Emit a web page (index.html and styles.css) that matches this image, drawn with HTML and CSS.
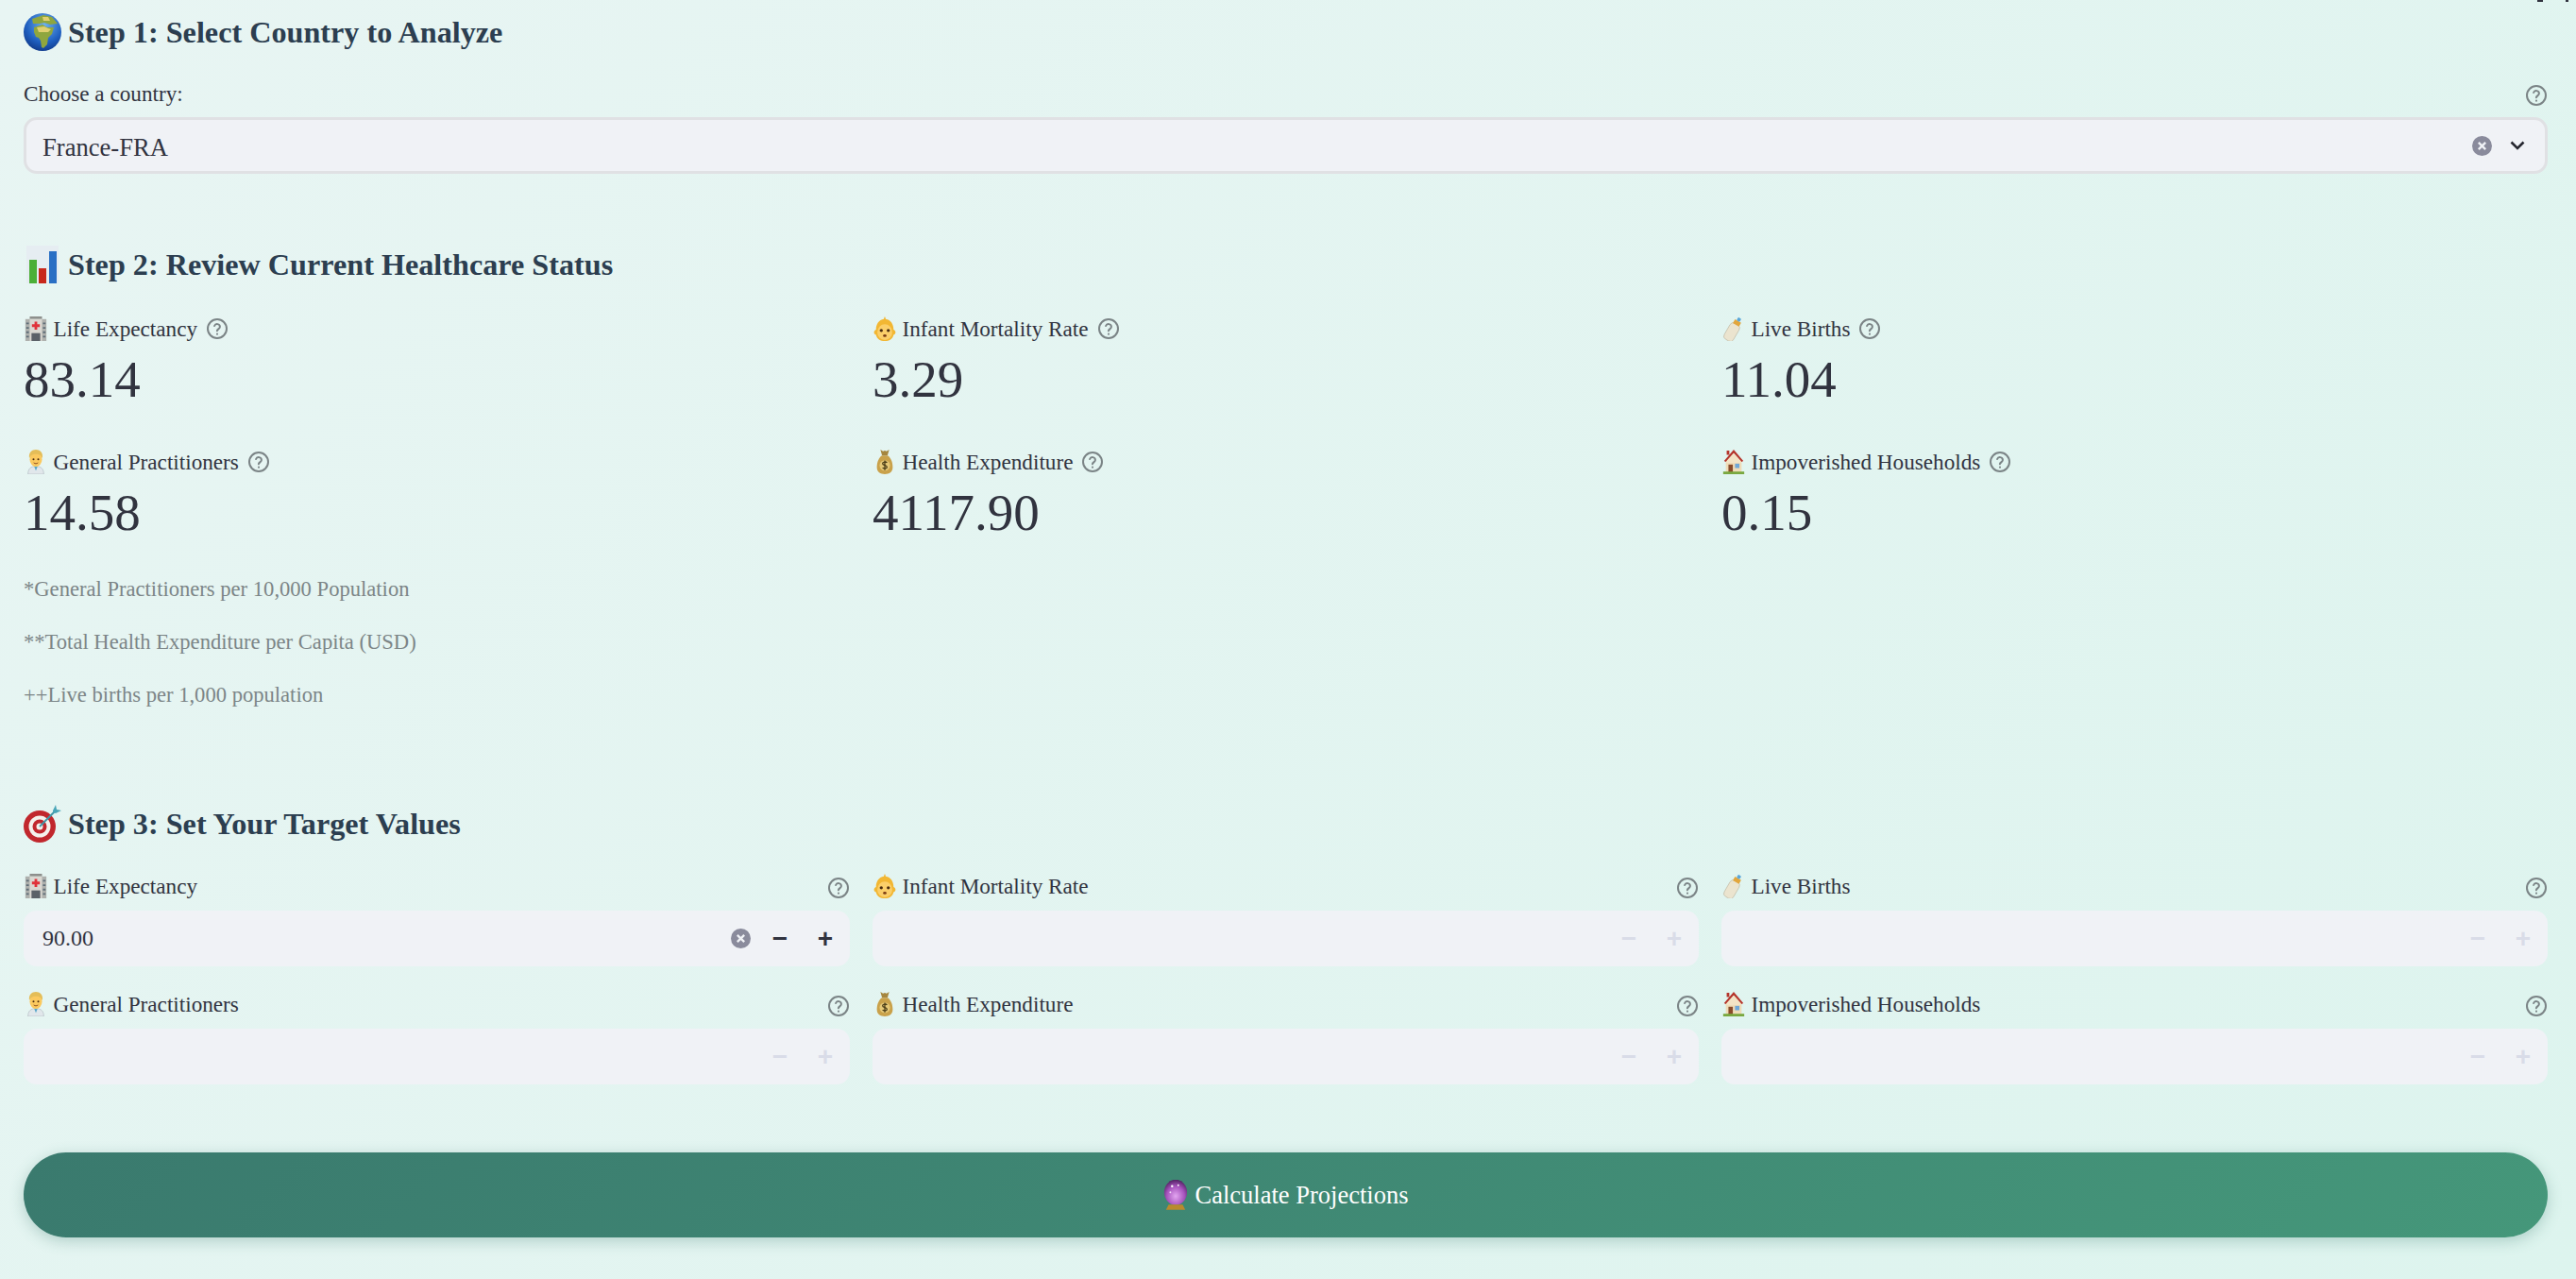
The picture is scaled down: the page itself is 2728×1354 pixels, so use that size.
FILE: index.html
```html
<!DOCTYPE html>
<html lang="en">
<head>
    <meta charset="UTF-8" />
    <title>Healthcare Projections</title>
    <link rel="stylesheet" href="styles.css">
</head>
<body>
    <svg class="defs" width="0" height="0">
        <defs>
            <radialGradient id="sea" cx="55%" cy="30%" r="80%">
                <stop offset="0" stop-color="#6fb2ee" /><stop offset="0.6" stop-color="#1f5fc0" /><stop offset="1" stop-color="#0c2f7a" />
            </radialGradient>
            <radialGradient id="orbglow" cx="50%" cy="65%" r="65%">
                <stop offset="0" stop-color="#e3a6f0" /><stop offset="0.6" stop-color="#a653bd" /><stop offset="1" stop-color="#4f2160" />
            </radialGradient>
            <symbol id="help" viewBox="0 0 24 24">
                <circle cx="12" cy="12" r="10" fill="none" stroke="currentColor" stroke-width="2" />
                <path d="M9.1 9a3 3 0 0 1 5.8 1c0 2-3 2.600-3 4.200M12 17.600v.1" fill="none" stroke="currentColor" stroke-width="2" stroke-linecap="round" />
            </symbol>
            <symbol id="globe" viewBox="0 0 40 40">
                <circle cx="20" cy="20" r="20" fill="url(#sea)" />
                <path d="M9 6l12-4 9 2 6 7-8 1-6-2-5 1-7 0z" fill="#8fa63e" />
                <path d="M11 15l9-3 5 3 7 0-2 7-4 4-1 7-4 4-2-1-1-7-2-3-3-1-2-5z" fill="#8fa63e" />
                <path d="M14 15l8-1 4 2 3 1-3 3-10 0zM20 4l6 0 2 4-7 0z" fill="#e0d070" />
            </symbol>
            <symbol id="chart" viewBox="0 0 34 40">
                <rect width="34" height="40" fill="#e6edf2" />
                <rect x="3" y="15" width="8" height="25" fill="#4caf38" />
                <rect x="13" y="24" width="8" height="16" fill="#c8281c" />
                <rect x="24" y="6" width="8" height="34" fill="#2a6fc4" />
            </symbol>
            <symbol id="hospital" viewBox="0 0 28 28">
                <rect x="7" y="0" width="14" height="3" fill="#8d8f8c" />
                <rect x="2" y="3" width="24" height="25" fill="#aeb0ad" />
                <rect x="7" y="3" width="14" height="25" fill="#dad8d2" />
                <path d="M12.500 6h3v3h3v3h-3v3h-3v-3h-3v-3h3z" fill="#e0323a" />
                <rect x="9" y="19" width="10" height="9" fill="#5b6168" />
                <path d="M3 7h3v2H3zM22 7h3v2h-3zM3 12h3v2H3zM22 12h3v2h-3zM3 17h3v2H3zM22 17h3v2h-3zM3 22h3v2H3zM22 22h3v2h-3z" fill="#5f6d78" />
            </symbol>
            <symbol id="baby" viewBox="0 0 28 28">
                <path d="M14 0c1 2 1 3 1 3 6 1 9 6 9 12 3 1 3 5 0 6-1 5-5 7-10 7s-9-2-10-7c-3-1-3-5 0-6 0-6 3-11 9-12 0 0 0-1 1-3z" fill="#f2b733" />
                <ellipse cx="14" cy="18" rx="8.500" ry="9" fill="#fbcf6a" />
                <circle cx="10" cy="16" r="1.800" fill="#4a2c0f" />
                <circle cx="18" cy="16" r="1.800" fill="#4a2c0f" />
                <ellipse cx="14" cy="22" rx="2" ry="1.500" fill="#7a3c14" />
            </symbol>
            <symbol id="bottle" viewBox="0 0 28 28">
                <g transform="rotate(30 14 14)">
                    <rect x="8" y="8" width="12" height="21" rx="4" fill="#ebe4cf" stroke="#b8b29c" stroke-width="0.600" />
                    <rect x="10" y="4" width="8" height="5" fill="#e2a63c" />
                    <rect x="12" y="0" width="4" height="4" rx="1" fill="#5aa6d8" />
                </g>
            </symbol>
            <symbol id="doctor" viewBox="0 0 28 28">
                <path d="M5 28c0-6 3-9 9-9s9 3 9 9z" fill="#e1e7eb" stroke="#a8b3ba" stroke-width="0.600" />
                <path d="M12 19h4l-2 5z" fill="#58a7c9" />
                <ellipse cx="14" cy="11" rx="7" ry="8.500" fill="#fbc95f" />
                <path d="M6.500 10c-1-7 3-10 7.500-10s8.500 3 7.500 10c-1-3-3-5-7.500-5s-6.500 2-7.500 5z" fill="#e4bd58" />
                <circle cx="11.300" cy="11" r="1.100" fill="#4a2c0f" />
                <circle cx="16.700" cy="11" r="1.100" fill="#4a2c0f" />
                <path d="M11.500 15c2 1.300 3 1.300 5 0" stroke="#8a4a1a" fill="none" />
            </symbol>
            <symbol id="bag" viewBox="0 0 28 28">
                <path d="M9 0l3 2 2-1 2 1 3-2-2 7h-6z" fill="#a5863f" />
                <path d="M10 7h8c4 4 5 9 5 13 0 6-4 8-9 8s-9-2-9-8c0-4 1-9 5-13z" fill="#c9a14a" />
                <circle cx="14" cy="18" r="6" fill="#e5c877" />
                <path d="M16.500 15c-1-1.500-5-1.500-5 .8 0 2.700 5 1.200 5 4 0 2.200-4 2.200-5 .7M14 12.500v11" fill="none" stroke="#3f3210" stroke-width="1.300" />
            </symbol>
            <symbol id="house" viewBox="0 0 28 28">
                <rect x="5" y="11" width="18" height="15" fill="#efdcb8" />
                <path d="M14 0l11 13-2 1L14 4 5 14l-2-1zM6 1h3v5H6z" fill="#b5352c" />
                <path d="M14 4l8 9v2H6v-2z" fill="#f3e4c6" />
                <rect x="8" y="17" width="5" height="9" fill="#8a4b2a" />
                <rect x="15.500" y="16" width="5" height="5" fill="#6fa8d8" />
                <rect x="2" y="25" width="24" height="3" fill="#79a83f" />
            </symbol>
            <symbol id="dart" viewBox="0 0 40 40">
                <circle cx="17" cy="23" r="17" fill="#c1272d" />
                <circle cx="17" cy="23" r="11.500" fill="#f4f1ec" />
                <circle cx="17" cy="23" r="7.500" fill="#c1272d" />
                <circle cx="17" cy="23" r="3.500" fill="#f4f1ec" />
                <path d="M17 23L33 7" stroke="#3f97a8" stroke-width="2" />
                <path d="M31 6l3-6 1 5 5 1-6 3-3-1z" fill="#4aa6b8" />
            </symbol>
            <symbol id="orb" viewBox="0 0 28 34">
                <ellipse cx="14" cy="14" rx="13" ry="14.500" fill="url(#orbglow)" />
                <circle cx="10" cy="7" r="1.300" fill="#fff" />
                <circle cx="17" cy="6" r="1" fill="#fff" />
                <circle cx="8" cy="14" r="1" fill="#f4dcf8" />
                <path d="M6 28h16l3 6H3z" fill="#b98a2e" />
            </symbol>
        </defs>
    </svg>

    <div class="toolbar-edge"><span></span><span></span></div>

    <main class="page">
        <h3 class="step-title"><svg class="step-icon"><use href="#globe" /></svg>Step 1: Select Country to Analyze</h3>
        <div class="field-head">
            <label class="field-label">Choose a country:</label>
            <svg class="help"><use href="#help" /></svg>
        </div>
        <div class="select-box">
            <span class="select-value">France-FRA</span>
            <span class="clear-btn"><svg viewBox="0 0 20 20"><path d="M6.500 6.500l7 7M13.500 6.500l-7 7" /></svg></span>
            <svg class="chevron" viewBox="0 0 16 10"><path d="M1.500 1.500L8 8l6.500-6.500" /></svg>
        </div>

        <h3 class="step-title step-two"><svg class="step-icon chart-icon"><use href="#chart" /></svg>Step 2: Review Current Healthcare Status</h3>
        <div class="metric-grid">
            <div class="metric">
                <div class="metric-label"><svg class="emoji"><use href="#hospital" /></svg>Life Expectancy<svg class="help"><use href="#help" /></svg></div>
                <div class="metric-value">83.14</div>
            </div>
            <div class="metric">
                <div class="metric-label"><svg class="emoji"><use href="#baby" /></svg>Infant Mortality Rate<svg class="help"><use href="#help" /></svg></div>
                <div class="metric-value">3.29</div>
            </div>
            <div class="metric">
                <div class="metric-label"><svg class="emoji"><use href="#bottle" /></svg>Live Births<svg class="help"><use href="#help" /></svg></div>
                <div class="metric-value">11.04</div>
            </div>
            <div class="metric">
                <div class="metric-label"><svg class="emoji"><use href="#doctor" /></svg>General Practitioners<svg class="help"><use href="#help" /></svg></div>
                <div class="metric-value">14.58</div>
            </div>
            <div class="metric">
                <div class="metric-label"><svg class="emoji"><use href="#bag" /></svg>Health Expenditure<svg class="help"><use href="#help" /></svg></div>
                <div class="metric-value">4117.90</div>
            </div>
            <div class="metric">
                <div class="metric-label"><svg class="emoji"><use href="#house" /></svg>Impoverished Households<svg class="help"><use href="#help" /></svg></div>
                <div class="metric-value">0.15</div>
            </div>
        </div>
        <div class="notes">
            <p>*General Practitioners per 10,000 Population</p>
            <p>**Total Health Expenditure per Capita (USD)</p>
            <p>++Live births per 1,000 population</p>
        </div>

        <h3 class="step-title step-three"><svg class="step-icon"><use href="#dart" /></svg>Step 3: Set Your Target Values</h3>
        <div class="target-grid">
            <div class="target">
                <div class="field-head">
                    <label class="field-label"><svg class="emoji"><use href="#hospital" /></svg>Life Expectancy</label>
                    <svg class="help"><use href="#help" /></svg>
                </div>
                <div class="num-input">
                    <input type="text" value="90.00">
                    <span class="clear-btn"><svg viewBox="0 0 20 20"><path d="M6.500 6.500l7 7M13.500 6.500l-7 7" /></svg></span>
                    <button class="step-btn">&minus;</button>
                    <button class="step-btn">+</button>
                </div>
            </div>
            <div class="target">
                <div class="field-head">
                    <label class="field-label"><svg class="emoji"><use href="#baby" /></svg>Infant Mortality Rate</label>
                    <svg class="help"><use href="#help" /></svg>
                </div>
                <div class="num-input off">
                    <input type="text">
                    <button class="step-btn">&minus;</button>
                    <button class="step-btn">+</button>
                </div>
            </div>
            <div class="target">
                <div class="field-head">
                    <label class="field-label"><svg class="emoji"><use href="#bottle" /></svg>Live Births</label>
                    <svg class="help"><use href="#help" /></svg>
                </div>
                <div class="num-input off">
                    <input type="text">
                    <button class="step-btn">&minus;</button>
                    <button class="step-btn">+</button>
                </div>
            </div>
            <div class="target">
                <div class="field-head">
                    <label class="field-label"><svg class="emoji"><use href="#doctor" /></svg>General Practitioners</label>
                    <svg class="help"><use href="#help" /></svg>
                </div>
                <div class="num-input off">
                    <input type="text">
                    <button class="step-btn">&minus;</button>
                    <button class="step-btn">+</button>
                </div>
            </div>
            <div class="target">
                <div class="field-head">
                    <label class="field-label"><svg class="emoji"><use href="#bag" /></svg>Health Expenditure</label>
                    <svg class="help"><use href="#help" /></svg>
                </div>
                <div class="num-input off">
                    <input type="text">
                    <button class="step-btn">&minus;</button>
                    <button class="step-btn">+</button>
                </div>
            </div>
            <div class="target">
                <div class="field-head">
                    <label class="field-label"><svg class="emoji"><use href="#house" /></svg>Impoverished Households</label>
                    <svg class="help"><use href="#help" /></svg>
                </div>
                <div class="num-input off">
                    <input type="text">
                    <button class="step-btn">&minus;</button>
                    <button class="step-btn">+</button>
                </div>
            </div>
        </div>

        <button class="calc-btn"><svg class="orb-icon"><use href="#orb" /></svg>Calculate Projections</button>
    </main>
</body>
</html>
```

FILE: styles.css
```css
* {
    box-sizing: border-box;
}

html, body {
    height: 100%;
}

body {
    margin: 0;
    font-family: "Liberation Serif", "Noto Sans CJK SC", serif;
    color: #31333f;
    background: linear-gradient(135deg, #e8f5f3 0%, #ddf4ee 100%);
    overflow: hidden;
    position: relative;
}

.defs {
    position: absolute;
}

.toolbar-edge {
    position: absolute;
    top: 0;
    right: 8px;
    display: flex;
    gap: 24px;
}

.toolbar-edge span {
    width: 6px;
    height: 2px;
    background: #31333f;
}

.toolbar-edge span:last-child {
    width: 3px;
}

.page {
    padding: 0 30px 0 25px;
}

.step-title {
    display: flex;
    align-items: center;
    height: 40px;
    margin: 14px 0 0;
    font-size: 32.2px;
    font-weight: 700;
    color: #2c3e50;
}

.step-icon {
    width: 40px;
    height: 40px;
    margin-right: 7px;
    flex: none;
}

.chart-icon {
    width: 34px;
    margin: 0 10px 0 3px;
}

.step-two {
    margin-top: 76px;
}

.step-three {
    margin-top: 88px;
}

.field-head {
    display: flex;
    justify-content: space-between;
    align-items: center;
    height: 30px;
}

.step-title + .field-head {
    margin-top: 30px;
}

.field-label {
    display: flex;
    align-items: center;
    font-size: 23.2px;
}

.help {
    width: 24px;
    height: 24px;
    flex: none;
    color: #7b8486;
    margin-top: 3px;
}

.emoji {
    width: 26px;
    height: 26px;
    margin-right: 5.5px;
    flex: none;
}

.select-box {
    display: flex;
    align-items: center;
    height: 60px;
    margin-top: 10px;
    padding: 0 21px 0 17px;
    background: #f0f2f6;
    border: 3px solid #e0e1e4;
    border-radius: 14px;
}

.select-value {
    flex: 1;
    padding-top: 4px;
    font-size: 26.6px;
}

.clear-btn {
    display: flex;
    width: 21px;
    height: 21px;
    border-radius: 50%;
    background: #8a8b9c;
    flex: none;
}

.clear-btn path {
    stroke: #f0f2f6;
    stroke-width: 2.2;
    fill: none;
}

.chevron {
    width: 16px;
    height: 10px;
    margin-left: 19px;
    flex: none;
}

.chevron path {
    stroke: #262730;
    stroke-width: 2.6;
    fill: none;
}

.metric-grid {
    display: grid;
    grid-template-columns: repeat(3, 1fr);
    gap: 21px 24px;
    margin: 33px 0 2px;
}

.metric {
    height: 120px;
}

.metric-label {
    display: flex;
    align-items: center;
    height: 30px;
    font-size: 23.2px;
}

.metric-label .help {
    margin: 0 0 0 9px;
}

.metric-value {
    margin-top: 6px;
    font-size: 55px;
    line-height: 66px;
}

.notes p {
    margin: 0;
    height: 56px;
    line-height: 56px;
    font-size: 22.6px;
    color: #7c8587;
}

.target-grid {
    display: grid;
    grid-template-columns: repeat(3, 1fr);
    gap: 25px 24px;
    margin-top: 31px;
}

.num-input {
    display: flex;
    align-items: center;
    height: 59px;
    margin-top: 11px;
    padding-left: 18px;
    background: #f0f2f6;
    border-radius: 14px;
}

.num-input input {
    flex: 1;
    min-width: 0;
    border: 0;
    background: none;
    outline: none;
    font: inherit;
    font-size: 24px;
    color: #31333f;
}

.step-btn {
    width: 48px;
    border: 0;
    padding: 0;
    background: none;
    font-family: "Liberation Sans", sans-serif;
    font-size: 28px;
    font-weight: 700;
    line-height: 1;
    color: #31333f;
}

.num-input .clear-btn {
    margin-right: 7px;
}

.num-input .step-btn:last-child {
    margin-right: 2px;
}

.off .step-btn {
    color: #d9dce8;
}

.calc-btn {
    display: flex;
    justify-content: center;
    align-items: center;
    width: 100%;
    height: 90px;
    margin-top: 72px;
    border: 0;
    border-radius: 45px;
    background: linear-gradient(135deg, #3a7a6e 0%, #45977a 100%);
    box-shadow: 0 4px 15px rgba(58, 122, 110, 0.3);
    color: #fff;
    font-family: inherit;
    font-size: 26.5px;
}

.orb-icon {
    width: 26px;
    height: 32px;
    margin-right: 8px;
}
```
